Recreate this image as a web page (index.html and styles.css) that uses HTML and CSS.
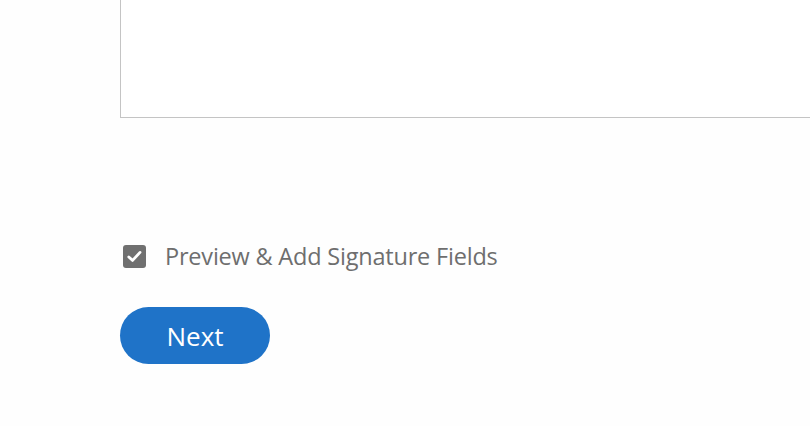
FILE: index.html
```html
<!DOCTYPE html>
<html>
<head>
<meta charset="utf-8">
<link rel="stylesheet" href="styles.css">
</head>
<body>
<div class="page">
  <div class="message-box"></div>
  <label class="check-row">
    <span class="checkbox">
      <svg width="15" height="13" viewBox="0 0 15 13"><path d="M1.8 7 L5.6 10.4 L13 2.4" fill="none" stroke="#fff" stroke-width="2.8" stroke-linecap="round" stroke-linejoin="round"/></svg>
    </span>
    <span class="check-label">Preview &amp; Add Signature Fields</span>
  </label>
  <button class="next-btn">Next</button>
</div>
</body>
</html>
```
FILE: styles.css
```css
html, body {
  margin: 0;
  padding: 0;
  background: #fefefe;
  overflow: hidden;
}
.page {
  padding-left: 120px;
  display: flex;
  flex-direction: column;
  align-items: flex-start;
  font-family: "Open Sans", "Noto Sans", sans-serif;
}
.message-box {
  align-self: stretch;
  height: 117px;
  background: #fff;
  border-left: 1px solid #c4c4c4;
  border-bottom: 1px solid #c4c4c4;
}
.check-row {
  margin-top: 126px;
  display: flex;
  align-items: center;
  gap: 19px;
  height: 24px;
}
.checkbox {
  width: 23px;
  height: 23px;
  margin-left: 3px;
  border-radius: 3px;
  background: #707070;
  display: flex;
  align-items: center;
  justify-content: center;
}
.check-label {
  font-size: 23.5px;
  color: #6e6e6e;
  letter-spacing: -0.2px;
}
.next-btn {
  margin-top: 39px;
  width: 150px;
  height: 57px;
  border: none;
  border-radius: 29px;
  background: #1f73c8;
  color: #fff;
  font-family: "Open Sans", "Noto Sans", sans-serif;
  font-size: 26px;
  padding: 0;
}
```
